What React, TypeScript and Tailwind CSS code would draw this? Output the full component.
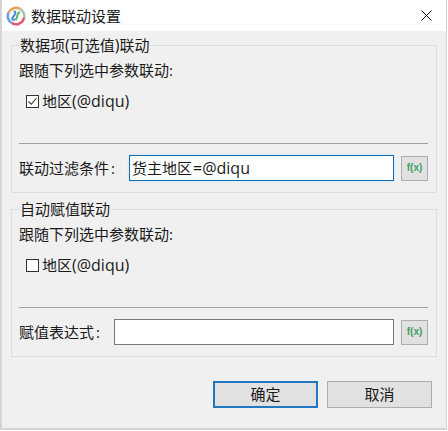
import React from "react";

function Logo() {
  return (
    <svg width="20" height="20" viewBox="0 0 20 20" className="shrink-0">
      <circle cx="10" cy="10" r="8" fill="#fff" />
      <path d="M2.6 6.5 A8.2 8.2 0 0 1 14 2.8" fill="none" stroke="#e8a04a" strokeWidth="2.6" />
      <path d="M14 2.8 A8.2 8.2 0 0 1 18 12" fill="none" stroke="#a8bfae" strokeWidth="2.6" />
      <path d="M18 12 A8.2 8.2 0 0 1 6 17.2" fill="none" stroke="#e0566a" strokeWidth="2.6" />
      <path d="M6 17.2 A8.2 8.2 0 0 1 2.6 6.5" fill="none" stroke="#6f9fd8" strokeWidth="2.6" />
      <path d="M7.5 5.5 C11 5 9 9 7 11 C5 13 7 15 9.5 13" fill="none" stroke="#4f86d8" strokeWidth="2" />
      <path d="M14 6 C10 7 12.5 11 9.5 14" fill="none" stroke="#5dbb63" strokeWidth="2" />
    </svg>
  );
}

function Checkbox({ checked }: { checked?: boolean }) {
  return (
    <span className="w-[13px] h-[13px] border border-[#333333] bg-white shrink-0 flex items-center justify-center">
      {checked && (
        <svg width="11" height="11" viewBox="0 0 11 11">
          <path d="M1.5 5.5 L4.3 8.3 L9.5 2" fill="none" stroke="#333333" strokeWidth="1.1" />
        </svg>
      )}
    </span>
  );
}

function Fx() {
  return (
    <button className="w-[27px] h-[25px] ml-[7px] shrink-0 border border-[#adadad] bg-[#e1e1e1] flex items-center justify-center text-[10px] font-bold leading-none text-[#3f9f62] font-['Liberation_Sans',sans-serif]">
      f(x)
    </button>
  );
}

function Group({
  title,
  checked,
  label,
  value,
  labelWidth,
  focused,
}: {
  title: React.ReactNode;
  checked?: boolean;
  label: string;
  value?: React.ReactNode;
  labelWidth: string;
  focused?: boolean;
}) {
  return (
    <section className="relative ml-[9px] mr-[9px] h-[148px] border border-[#dcdcdc] pl-[7px] pr-[8px]">
      <h2 className="absolute left-[8px] top-[-11px] bg-[#f0f0f0] pr-[1px] text-[15px] leading-[20px] font-normal">{title}</h2>
      <p className="pt-[14px] text-[15px] leading-[20px]">跟随下列选中参数联动:</p>
      <label className="flex items-center gap-[3px] ml-[7px] mt-[11px] h-[20px] text-[15px] leading-[20px]">
        <Checkbox checked={checked} />
        <span>
          地区<span className="text-[16px]">(@diqu)</span>
        </span>
      </label>
      <hr className="mt-[32px] border-0 h-px bg-[#a0a0a0]" />
      <div className="flex items-center mt-[11px] h-[26px]">
        <span className={`${labelWidth} shrink-0 text-[15px] leading-[20px]`}>
          {label}
          <span className="pl-[2px]">:</span>
        </span>
        <div
          className={`flex-1 h-[26px] bg-white border px-[2px] text-[15px] leading-[24px] ${
            focused ? "border-[#0f6cae] shadow-[0_0_3px_#cfe8fb]" : "border-[#7a7a7a]"
          }`}
        >
          {value}
        </div>
        <Fx />
      </div>
    </section>
  );
}

export default function App() {
  return (
    <div className="w-[448px] h-[431px] overflow-hidden bg-white font-['Open_Sans','Noto_Sans_CJK_SC',sans-serif] text-[#1a1a1a]">
      <div className="w-[447px] h-[430px] bg-[#f0f0f0] border-l-2 border-r border-b-2 border-[#d4d4d4] flex flex-col">
        <header className="h-[31px] shrink-0 bg-white flex items-center pl-[4px] pr-[14px]">
          <Logo />
          <span className="ml-[5px] text-[15px] leading-[20px] flex-1">数据联动设置</span>
          <svg width="11" height="11" viewBox="0 0 11 11">
            <path d="M0.5 0.5 L10.5 10.5 M10.5 0.5 L0.5 10.5" stroke="#111111" strokeWidth="1" />
          </svg>
        </header>
        <main className="flex-1 flex flex-col pt-[14px]">
          <Group
            title={
              <>
                数据项<span className="text-[16px]">(</span>可选值<span className="text-[16px]">)</span>联动
              </>
            }
            checked
            label="联动过滤条件"
            value={
              <>
                货主地区<span className="text-[16px] px-[1px]">=@diqu</span>
              </>
            }
            labelWidth="w-[110px]"
            focused
          />
          <div className="mt-[16px]">
            <Group title="自动赋值联动" label="赋值表达式" labelWidth="w-[95px]" />
          </div>
          <footer className="flex justify-end gap-[9px] mt-[24px] pr-[14px]">
            <button className="w-[105px] h-[27px] bg-[#e1e1e1] border-2 border-[#1f78c1] text-[15px] leading-none">确定</button>
            <button className="w-[105px] h-[27px] bg-[#e1e1e1] border border-[#adadad] text-[15px] leading-none">取消</button>
          </footer>
        </main>
      </div>
    </div>
  );
}
